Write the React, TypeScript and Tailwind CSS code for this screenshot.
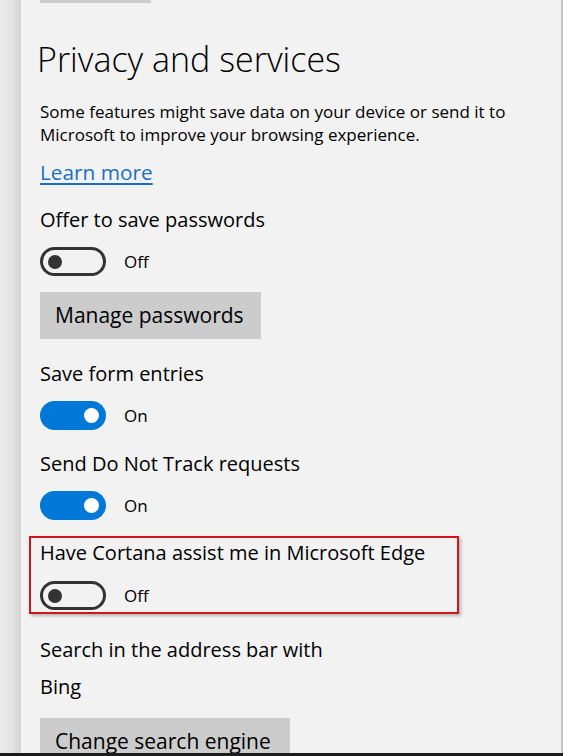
import React from 'react';

const Toggle: React.FC<{ on: boolean; className?: string }> = ({ on, className = '' }) => (
  <div className={`flex items-center gap-[18px] ${className}`}>
    {on ? (
      <div className="flex h-[29px] w-[66px] items-center justify-end rounded-full bg-[#0078d7] pr-[7px]">
        <div className="h-[15px] w-[15px] rounded-full bg-white" />
      </div>
    ) : (
      <div className="flex h-[29px] w-[66px] items-center rounded-full border-[3px] border-[#333333] pl-[5px]">
        <div className="h-[14px] w-[14px] rounded-full bg-[#333333]" />
      </div>
    )}
    <span className="text-[17px] leading-[23px] text-black">{on ? 'On' : 'Off'}</span>
  </div>
);

const Label: React.FC<{ children: React.ReactNode; className?: string }> = ({ children, className = '' }) => (
  <div className={`text-[20px] leading-[28px] text-black ${className}`}>{children}</div>
);

export default function App() {
  return (
    <div className="flex h-[756px] w-[563px] overflow-hidden border-b-[3px] border-[#1c1c1c] bg-[#f2f2f2] font-['Open_Sans','Liberation_Sans',sans-serif] text-black">
      {/* window edge on the left */}
      <div className="w-[21px] shrink-0 bg-gradient-to-r from-[#ececec] via-[#e5e5e5] to-[#d3d3d3]" />

      <div className="flex flex-1 flex-col items-start border-r-2 border-[#c6c6c6] pl-[19px]">
        <div className="h-[3px] w-[111px] shrink-0 bg-[#cccccc]" />

        <h1 className="-ml-[3px] mt-[34px] text-[34px] font-light leading-[44px]">Privacy and services</h1>

        <p className="mt-[19px] w-[500px] text-[17px] leading-[23px]">
          Some features might save data on your device or send it to Microsoft to improve your browsing experience.
        </p>

        <a href="#" className="mt-[12px] text-[20.8px] leading-[28px] text-[#1b6fc2] underline underline-offset-[3px]">
          Learn more
        </a>

        <Label className="mt-[20px]">Offer to save passwords</Label>
        <Toggle on={false} className="mt-[13px]" />
        <button className="mt-[16px] flex h-[47px] w-[221px] shrink-0 items-center bg-[#cccccc] pl-[15px] text-[21px] text-black">
          Manage passwords
        </button>

        <Label className="mt-[21px]">Save form entries</Label>
        <Toggle on className="mt-[13px]" />

        <Label className="mt-[20px]">Send Do Not Track requests</Label>
        <Toggle on className="mt-[13px]" />

        <div className="relative mt-[19px]">
          <Label>Have Cortana assist me in Microsoft Edge</Label>
          <Toggle on={false} className="mt-[14px]" />
          <div className="pointer-events-none absolute -left-[11px] -top-[3px] h-[78px] w-[430px] border-2 border-[#d4141c] shadow-[2px_2px_3px_rgba(0,0,0,0.25)]" />
        </div>

        <Label className="mt-[26px]">Search in the address bar with</Label>
        <Label className="mt-[9px]">Bing</Label>
        <button className="mt-[17px] flex h-[47px] w-[250px] shrink-0 items-center bg-[#cccccc] pl-[15px] text-[21px] text-black">
          Change search engine
        </button>
      </div>
    </div>
  );
}
